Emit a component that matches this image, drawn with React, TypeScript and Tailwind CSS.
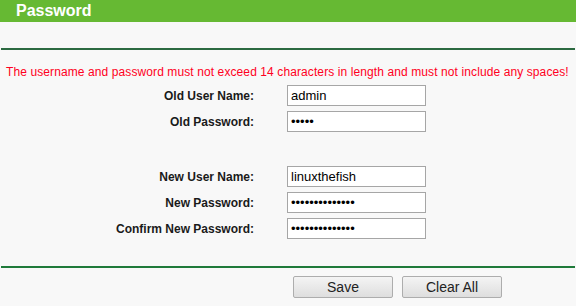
export default function App() {
  const rowsA = [
    { label: "Old User Name:", value: "admin", type: "text" },
    { label: "Old Password:", value: "admin", type: "password" },
  ]
  const rowsB = [
    { label: "New User Name:", value: "linuxthefish", type: "text" },
    { label: "New Password:", value: "12345678901234", type: "password" },
    { label: "Confirm New Password:", value: "12345678901234", type: "password" },
  ]

  const Row = ({ label, value, type }: { label: string; value: string; type: string }) => (
    <div className="flex h-[21px] items-center">
      <div className="w-[254px] text-right text-[12px] font-bold text-[#1a1a1a]">{label}</div>
      <input
        readOnly
        type={type}
        value={value}
        className="ml-[33px] h-[21px] w-[139px] border border-[#a6a6a6] bg-white px-[3px] text-[13px] text-black outline-none"
        style={{ fontFamily: "'Liberation Sans', Arial, sans-serif" }}
      />
    </div>
  )

  return (
    <div className="h-[306px] w-[576px] overflow-hidden bg-[#f8f8f8] font-['Liberation_Sans',Arial,sans-serif]">
      <div className="flex h-[22px] items-center bg-[#66b933] pl-4 text-[16px] font-bold text-white">
        Password
      </div>
      <div className="mx-px mt-[26px] h-[2px] bg-[#2c6a41]" />
      <div className="mt-[13px] pl-[6px] text-[12px] tracking-[0.1px] whitespace-nowrap text-[#ff0022]">
        The username and password must not exceed 14 characters in length and must not include any spaces!
      </div>
      <div className="mt-[4px] flex flex-col gap-[5px]">
        {rowsA.map((r) => (
          <Row key={r.label} {...r} />
        ))}
      </div>
      <div className="mt-[34px] flex flex-col gap-[5px]">
        {rowsB.map((r) => (
          <Row key={r.label} {...r} />
        ))}
      </div>
      <div className="mx-px mt-[27px] h-[2px] bg-[#1f7a3a]" />
      <div className="mt-[8px] flex gap-[9px] pl-[293px]">
        <button className="h-[22px] w-[100px] rounded-[2px] border border-[#adadad] bg-gradient-to-b from-[#f4f4f4] to-[#dedede] text-[14px] text-[#222]">
          Save
        </button>
        <button className="h-[22px] w-[100px] rounded-[2px] border border-[#adadad] bg-gradient-to-b from-[#f4f4f4] to-[#dedede] text-[14px] text-[#222]">
          Clear All
        </button>
      </div>
    </div>
  )
}
